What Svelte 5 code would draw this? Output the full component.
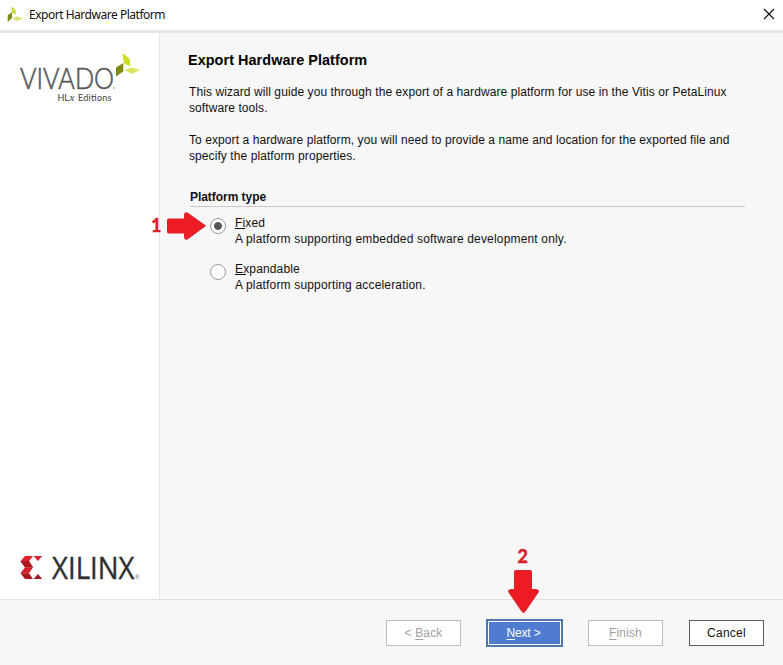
<script>
  let selected = $state('fixed');
  const options = [
    { id: 'fixed', key: 'F', rest: 'ixed', note: 'A platform supporting embedded software development only.' },
    { id: 'expandable', key: 'E', rest: 'xpandable', note: 'A platform supporting acceleration.' }
  ];
</script>

<div class="window">
  <header>
    <svg class="app" width="18" height="18" viewBox="6 4 18 18">
      <path fill="#cbd63c" d="M11.2 5.500l4.300 3.300.4 4.700-3.900-1.600z" />
      <path fill="#7f8a17" d="M7.700 14.300l4.300-3V17l-4.300 3.900z" />
      <path fill="#dce27c" d="M12.500 17.200l4.500-1.900 6.300 2.400-6.300 2.400z" />
    </svg>
    <span class="title">Export Hardware Platform</span>
    <svg class="close" width="12" height="12" viewBox="0 0 12 12"><path d="M1 1l10 10M11 1L1 11" stroke="#111" stroke-width="1.2" /></svg>
  </header>

  <main>
    <aside>
      <svg width="159" height="72" viewBox="0 33 159 72">
        <text class="light" x="20" y="89" font-size="29" textLength="94" lengthAdjust="spacingAndGlyphs" fill="#58585a">VIVADO</text>
        <circle cx="114" cy="88" r=".8" fill="#777" />
        <text class="ed" y="101" font-size="9" fill="#3c3c3c"><tspan x="57.500">HL</tspan><tspan x="69.500" font-family="Liberation Serif" font-style="italic" font-size="11">x</tspan><tspan x="78" textLength="33.500">Editions</tspan></text>
        <path fill="#cddc29" d="M122.300 53l7.200 5.500 1 8-6.500-3z" />
        <path fill="#7f8a10" d="M123.300 63v8.500l-7.300 5v-9z" />
        <path fill="#dbe45d" d="M124 70.300l7.500-2.900 8.500 2.600-7.500 3.700z" />
      </svg>
      <svg width="159" height="40" viewBox="0 550 159 40">
        <path fill="#e0222c" d="M25 556h8l-4 5.300 4 6H25L20.500 561.300zM33.500 556h8.700l-4.200 5z" />
        <path fill="#a9161d" d="M20.500 561.300h8.500l4 6H25z" />
        <path fill="#d4202a" d="M25 567.300h8l-4 6h-8.500z" />
        <path fill="#a9161d" d="M20.500 573.300H29l4 5.700H25zM33.500 579h8.700l-4.200-5z" />
        <text class="xil" x="52" y="579" font-size="31.500" textLength="82.500" lengthAdjust="spacingAndGlyphs" fill="#2e2e30">XILINX</text>
        <text x="135" y="579" font-size="6" fill="#555" font-family="Liberation Sans">®</text>
      </svg>
    </aside>

    <section>
      <h1>Export Hardware Platform</h1>
      <p>This wizard will guide you through the export of a hardware platform for use in the Vitis or PetaLinux<br />software tools.</p>
      <p>To export a hardware platform, you will need to provide a name and location for the exported file and<br />specify the platform properties.</p>
      <h2>Platform type</h2>
      {#each options as o}
        <label>
          <input type="radio" name="type" value={o.id} bind:group={selected} />
          <span class="dot"></span>
          <span><span class="name"><u>{o.key}</u>{o.rest}</span><br />{o.note}</span>
        </label>
      {/each}
    </section>
  </main>

  <footer>
    <button class="off">&lt; <u>B</u>ack</button>
    <button class="next"><u>N</u>ext &gt;</button>
    <button class="off"><u>F</u>inish</button>
    <button class="cancel">Cancel</button>
  </footer>

  <svg class="marks" width="783" height="665" viewBox="0 0 783 665">
    <g fill="#ed1c24" stroke="#d8232d" stroke-width="1" stroke-linejoin="round">
      <path d="M168.500 219h16v-4.500q0-2.500 3-1.500l18 12.800-18 13.200q-3 1-3-1.500v-4.500h-16q-1 0-1-1v-12q0-1 1-1z" />
      <path d="M515.500 570.500h15q1 0 1 1v18h5q3 .5 1.500 3L525 611.500q-1.500 2-3 0L509 592.500q-1.500-2.500 1.500-3h4v-18q0-1 1-1z" />
    </g>
    <g class="num" font-size="18" fill="#d8232a">
      <text x="151" y="232">1</text>
      <text x="517.500" y="563">2</text>
    </g>
  </svg>
</div>

<style>
  .window {
    position: relative;
    width: 783px;
    height: 665px;
    display: flex;
    flex-direction: column;
    background: #f7f7f7;
    color: #111;
    font: 12px/16px 'Liberation Sans', Arial, sans-serif;
  }
  header {
    box-sizing: border-box;
    height: 33px;
    padding: 0 8px 3px 6px;
    border-bottom: 3px solid #e6e6e6;
    background: #fff;
    display: flex;
    align-items: center;
  }
  .title { flex: 1; margin: 3px 0 0 5px; font: 12px/16px 'Noto Sans', sans-serif; letter-spacing: -.48px; }
  main { flex: 1; display: flex; min-height: 0; }
  aside {
    width: 159px;
    border-right: 1px solid #e6e6e6;
    background: #fff;
    display: flex;
    flex-direction: column;
    justify-content: space-between;
    padding-bottom: 9px;
  }
  aside svg { overflow: visible; }
  .light { font-family: Lato, sans-serif; font-weight: 300; stroke: #58585a; stroke-width: .6px; }
  .ed { font-family: Lato, sans-serif; }
  .xil { font-family: 'Open Sans', sans-serif; stroke: #2e2e30; stroke-width: .4px; }
  .num { font-family: Lato, sans-serif; font-weight: 900; stroke: #d8232a; stroke-width: .3px; }
  section { flex: 1; padding: 18px 38px 0 29px; }
  h1 { margin: 0 0 15px -1px; font-size: 14.400px; line-height: 18px; color: #000; letter-spacing: .07px; }
  p { margin: 0 0 16px; white-space: nowrap; letter-spacing: .08px; }
  h2 { margin: 25px 0 8px 1px; font-size: 12px; line-height: 17px; border-bottom: 1px solid #c8c8c8; letter-spacing: -.05px; }
  label { display: flex; margin: 0 0 14px 20px; white-space: nowrap; letter-spacing: .17px; }
  input { appearance: none; width: 0; height: 0; margin: 0; }
  .dot {
    box-sizing: border-box;
    width: 16px;
    height: 16px;
    margin: 3px 9px 0 1px;
    border: 1px solid #999;
    border-radius: 50%;
    background: #fff;
  }
  input:checked + .dot { background: radial-gradient(circle, #555 3.500px, #fff 4.300px); }
  u { text-underline-offset: 2px; text-decoration-thickness: 1px; }
  .name { letter-spacing: 0.15px; }
  .name u {
    padding-right: 3px;
    margin-right: -3px;
    text-decoration: none;
    background: linear-gradient(#111, #111) 0 12px / 100% 1px no-repeat;
  }
  footer {
    box-sizing: border-box;
    height: 66px;
    padding: 20px 19px 0;
    border-top: 1px solid #e0e0e0;
    display: flex;
    justify-content: flex-end;
    gap: 25px;
  }
  button {
    box-sizing: border-box;
    width: 75px;
    height: 26px;
    padding: 0;
    border: 1px solid #5c5c5c;
    background: #fff;
    color: #111;
    font: inherit;
  }
  .off { border-color: #bcbcbc; color: #a0a0a0; letter-spacing: .15px; }
  .cancel { margin-left: 1px; letter-spacing: .25px; }
  .next { width: 77px; height: 28px; margin-top: -1px; padding-right: 2px; border: 2px solid #5078ae; background: #4f7bd0; color: #fff; box-shadow: inset 0 0 0 1px #fff; letter-spacing: -.15px; }
  .marks { position: absolute; inset: 0; pointer-events: none; }
</style>
